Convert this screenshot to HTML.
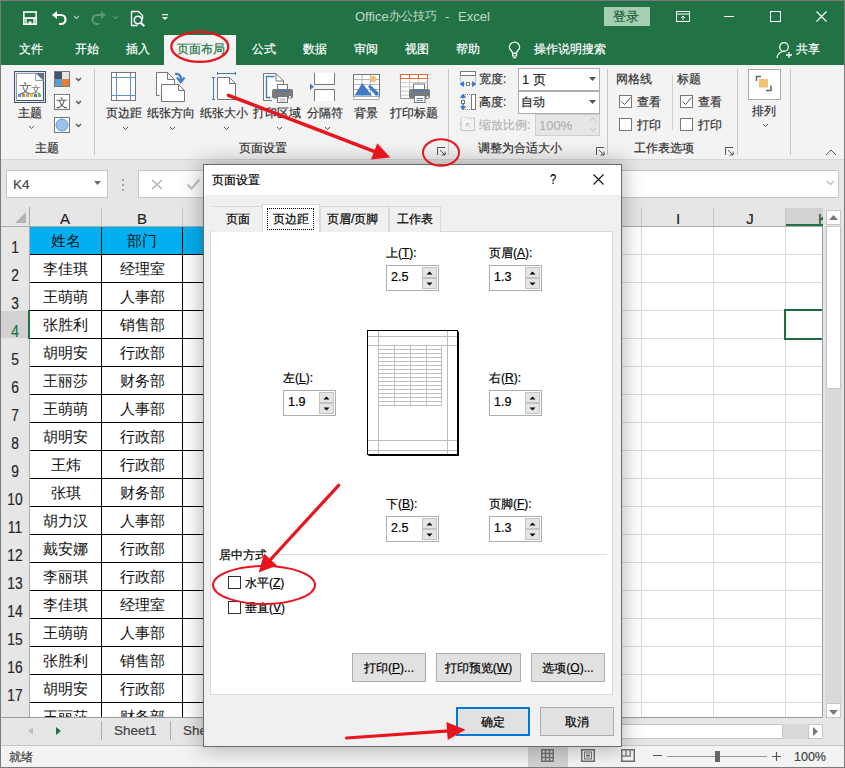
<!DOCTYPE html><html><head><meta charset="utf-8"><style>
html,body{margin:0;padding:0}
body{width:845px;height:768px;position:relative;overflow:hidden;background:#fff;font-family:"Liberation Sans",sans-serif}
.t{position:absolute;white-space:nowrap;line-height:1;-webkit-text-stroke:0.2px}
.n{-webkit-text-stroke:0}
div,svg{box-sizing:border-box}
</style></head><body>
<div style="position:absolute;left:0px;top:0px;width:845px;height:768px;background:#f3f3f3"></div>
<div style="position:absolute;left:0px;top:0px;width:845px;height:65px;background:#217346"></div>
<svg style="position:absolute;left:20px;top:8px;" width="20" height="20" viewBox="20 8 20 20"><rect x="23.8" y="12" width="12.4" height="12.2" fill="none" stroke="#fff" stroke-width="1.6"/><rect x="23" y="17.2" width="14" height="1.8" fill="#fff"/><path d="M26 19V24.5M34 19V24.5" stroke="#fff" stroke-width="1.4"/><rect x="28.5" y="21.5" width="3" height="3" fill="#fff"/></svg>
<svg style="position:absolute;left:51px;top:10px;" width="17" height="16" viewBox="0 0 17 16"><path d="M4 5h6a4.5 4.5 0 0 1 0 9h-2" fill="none" stroke="#fff" stroke-width="2.2"/><path d="M1 5l5-4v8z" fill="#fff"/></svg>
<svg style="position:absolute;left:73px;top:15px;" width="7" height="5" viewBox="0 0 7 5"><path d="M1 1l2.5 2.5L6 1" fill="none" stroke="#a9c9b5" stroke-width="1.2"/></svg>
<svg style="position:absolute;left:90px;top:10px;" width="17" height="16" viewBox="0 0 17 16"><path d="M13 5H7a4.5 4.5 0 0 0 0 9h2" fill="none" stroke="#5b9873" stroke-width="2.2"/><path d="M16 5l-5-4v8z" fill="#5b9873"/></svg>
<svg style="position:absolute;left:111.5px;top:15px;" width="7" height="5" viewBox="0 0 7 5"><path d="M1 1l2.5 2.5L6 1" fill="none" stroke="#5b9873" stroke-width="1.2"/></svg>
<svg style="position:absolute;left:130px;top:10px;" width="16" height="17" viewBox="0 0 16 17"><path d="M1.5 1.5h7l4 4v4M1.5 1.5v14h6" fill="none" stroke="#fff" stroke-width="1.3"/><circle cx="8" cy="10" r="3.8" fill="none" stroke="#fff" stroke-width="1.6"/><path d="M10.8 12.8l3.5 3.5" stroke="#fff" stroke-width="2"/></svg>
<svg style="position:absolute;left:162px;top:14px;" width="7" height="7" viewBox="0 0 7 7"><rect x="0" y="0" width="6" height="1.2" fill="#fff"/><path d="M0 3h6l-3 3z" fill="#fff"/></svg>
<div class="t" style="left:355px;top:10px;font-size:13px;color:#c2d8ca;-webkit-text-stroke:0">Office</div>
<div class="t" style="left:389px;top:10px;font-size:12px;color:#c2d8ca;-webkit-text-stroke:0">办公技巧</div>
<div class="t" style="left:445px;top:10px;font-size:13px;color:#c2d8ca;-webkit-text-stroke:0">-</div>
<div class="t" style="left:458px;top:10px;font-size:13px;color:#c2d8ca;-webkit-text-stroke:0">Excel</div>
<div style="position:absolute;left:604px;top:7px;width:46px;height:19px;background:#a5cfb3"></div>
<div class="t" style="left:613px;top:10px;font-size:13px;color:#1f5d38;">登录</div>
<svg style="position:absolute;left:676px;top:11px;" width="14" height="11" viewBox="0 0 14 11"><rect x="0.5" y="0.5" width="13" height="10" fill="none" stroke="#fff" stroke-width="1"/><path d="M0.5 3h13" stroke="#fff"/><path d="M7 9V5M5 7l2-2 2 2" fill="none" stroke="#fff"/></svg>
<div style="position:absolute;left:724px;top:16px;width:10px;height:1px;background:#fff"></div>
<svg style="position:absolute;left:770px;top:11px;" width="11" height="11" viewBox="0 0 11 11"><rect x="0.5" y="0.5" width="10" height="10" fill="none" stroke="#fff" stroke-width="1"/></svg>
<svg style="position:absolute;left:816px;top:11px;" width="11" height="11" viewBox="0 0 11 11"><path d="M0.5 0.5l10 10M10.5 0.5l-10 10" stroke="#fff" stroke-width="1.1"/></svg>
<div style="position:absolute;left:164px;top:35px;width:72px;height:30px;background:#f3f3f3"></div>
<div class="t" style="left:18.5px;top:43px;font-size:12px;color:#fff;">文件</div>
<div class="t" style="left:74.5px;top:43px;font-size:12px;color:#fff;">开始</div>
<div class="t" style="left:125.5px;top:43px;font-size:12px;color:#fff;">插入</div>
<div class="t" style="left:176.5px;top:43px;font-size:12px;color:#217346;">页面布局</div>
<div class="t" style="left:251.5px;top:43px;font-size:12px;color:#fff;">公式</div>
<div class="t" style="left:302.5px;top:43px;font-size:12px;color:#fff;">数据</div>
<div class="t" style="left:353.5px;top:43px;font-size:12px;color:#fff;">审阅</div>
<div class="t" style="left:404.5px;top:43px;font-size:12px;color:#fff;">视图</div>
<div class="t" style="left:455.5px;top:43px;font-size:12px;color:#fff;">帮助</div>
<svg style="position:absolute;left:500px;top:36px;" width="30" height="26" viewBox="500 36 30 26"><path d="M512.5 53.2C512.5 51 509.3 49.5 509.3 47.4A5.2 5.2 0 0 1 519.7 47.4C519.7 49.5 516.5 51 516.5 53.2Z" fill="none" stroke="#fff" stroke-width="1.2"/><rect x="512.6" y="53.6" width="4" height="2.4" fill="none" stroke="#fff" stroke-width="1.1"/><path d="M513 57.8H516.2" stroke="#fff" stroke-width="1.1"/></svg>
<div class="t" style="left:534px;top:43px;font-size:12px;color:#fff;">操作说明搜索</div>
<svg style="position:absolute;left:776px;top:42px;" width="18" height="17" viewBox="0 0 18 17"><circle cx="8" cy="5" r="4.3" fill="none" stroke="#fff" stroke-width="1.2"/><path d="M1 16a7 7 0 0 1 8-6.5" fill="none" stroke="#fff" stroke-width="1.2"/><path d="M13 10v6M10 13h6" stroke="#fff" stroke-width="1.3"/></svg>
<div class="t" style="left:796px;top:43px;font-size:12px;color:#fff;">共享</div>
<div style="position:absolute;left:0px;top:159px;width:845px;height:1px;background:#d6d6d6"></div>
<div style="position:absolute;left:94px;top:69px;width:1px;height:86px;background:#c8c8c8"></div>
<div style="position:absolute;left:448px;top:69px;width:1px;height:86px;background:#c8c8c8"></div>
<div style="position:absolute;left:607px;top:69px;width:1px;height:86px;background:#c8c8c8"></div>
<div style="position:absolute;left:737px;top:69px;width:1px;height:86px;background:#c8c8c8"></div>
<div style="position:absolute;left:790px;top:69px;width:1px;height:86px;background:#c8c8c8"></div>
<div style="position:absolute;left:672px;top:75px;width:1px;height:55px;background:#d0d0d0"></div>
<svg style="position:absolute;left:10px;top:66px;" width="40" height="40" viewBox="10 66 40 40"><rect x="14.5" y="71.5" width="31" height="31" fill="#e3e7ec" stroke="#44546a"/><path d="M16.5 73.5H36L43.5 81V100.5H16.5Z" fill="#fff" stroke="#8a9ab0"/><path d="M43.5 81V100.5H16.5" fill="none" stroke="#44546a" stroke-width="1.2"/><path d="M35.6 73H44V81.5Z" fill="#5f6f85"/><path d="M35.6 73.5V80.5H43.5" fill="#fff" stroke="#8a9ab0"/><text x="18.5" y="92.5" font-size="13" fill="#606060" style="font-family:Liberation Sans,sans-serif">文</text><text x="31" y="92.5" font-size="10" fill="#606060">文</text><rect x="18" y="94" width="3" height="3" fill="#5b9bd5"/><rect x="22" y="94" width="3" height="3" fill="#ed7d31"/><rect x="26" y="94" width="3" height="3" fill="#a5a5a5"/><rect x="30" y="94" width="3" height="3" fill="#ffc000"/><rect x="34" y="94" width="3" height="3" fill="#4472c4"/><rect x="38" y="94" width="3" height="3" fill="#70ad47"/></svg>
<div class="t" style="left:18px;top:107px;font-size:12px;color:#303030;">主题</div>
<svg style="position:absolute;left:28px;top:125px;" width="7" height="5" viewBox="0 0 7 5"><path d="M1 1l2.5 2.5L6 1" fill="none" stroke="#555" stroke-width="1"/></svg>
<svg style="position:absolute;left:54px;top:71px;" width="16" height="16" viewBox="0 0 16 16"><rect x="0.5" y="0.5" width="15" height="15" fill="#fff" stroke="#777"/><rect x="1" y="1" width="7" height="7" fill="#44546a"/><rect x="8" y="1" width="7" height="7" fill="#e7e6e6"/><rect x="1" y="8" width="7" height="7" fill="#5b9bd5"/><rect x="8" y="8" width="7" height="7" fill="#ed7d31"/></svg>
<svg style="position:absolute;left:54px;top:94px;" width="16" height="16" viewBox="0 0 16 16"><rect x="0.5" y="0.5" width="15" height="15" fill="#fff" stroke="#777"/><text x="2" y="13" font-size="12" fill="#444">文</text></svg>
<svg style="position:absolute;left:54px;top:117px;" width="16" height="16" viewBox="0 0 16 16"><rect x="0.5" y="0.5" width="15" height="15" fill="#fff" stroke="#777"/><circle cx="8" cy="8" r="6" fill="#9dc3e6" stroke="#5b9bd5"/></svg>
<svg style="position:absolute;left:75px;top:77px;" width="7" height="5" viewBox="0 0 7 5"><path d="M1 1l2.5 2.5L6 1" fill="none" stroke="#555" stroke-width="1.3"/></svg>
<svg style="position:absolute;left:75px;top:100px;" width="7" height="5" viewBox="0 0 7 5"><path d="M1 1l2.5 2.5L6 1" fill="none" stroke="#555" stroke-width="1.3"/></svg>
<svg style="position:absolute;left:75px;top:123px;" width="7" height="5" viewBox="0 0 7 5"><path d="M1 1l2.5 2.5L6 1" fill="none" stroke="#555" stroke-width="1.3"/></svg>
<div class="t" style="left:35px;top:142px;font-size:12px;color:#303030;">主题</div>
<svg style="position:absolute;left:111px;top:72px;" width="25" height="29" viewBox="0 0 25 29"><rect x="0.5" y="0.5" width="24" height="28" fill="#fff" stroke="#777"/><path d="M5.5 1v27M19.5 1v27M1 5.5h23M1 23.5h23" stroke="#5b8fd0" stroke-width="1"/></svg>
<div class="t" style="left:106px;top:107px;font-size:12px;color:#303030;">页边距</div>
<svg style="position:absolute;left:150px;top:66px;" width="40" height="40" viewBox="150 66 40 40"><path d="M156.5 95.5V72.5H167.5L174.5 79.5V84" fill="#fff" stroke="#767676"/><path d="M156.5 95.5H159.5" stroke="#767676"/><path d="M161.5 84.5H178.5L184.5 90.5V101.5H161.5Z" fill="#fff" stroke="#767676"/><path d="M167.5 72.5V79.5H174.5M178.5 84.5V90.5H184.5" fill="none" stroke="#767676"/><path d="M175 74C179.5 73.5 181.5 76 180.8 80" fill="none" stroke="#3f7cc4" stroke-width="2.2"/><path d="M177 77.5L180.8 82L184.6 77.5" fill="none" stroke="#3f7cc4" stroke-width="2.2"/></svg>
<div class="t" style="left:147px;top:107px;font-size:12px;color:#303030;">纸张方向</div>
<svg style="position:absolute;left:205px;top:66px;" width="40" height="40" viewBox="205 66 40 40"><path d="M217.5 77.5H229.5L235.5 83.5V99.5H217.5Z" fill="#fff" stroke="#767676"/><path d="M229.5 77.5V83.5H235.5" fill="none" stroke="#767676"/><path d="M217.5 73.5H235.5M217.5 72V75M235.5 72V75M213.5 77.5V99.5M212 77.5H215M212 99.5H215" stroke="#3f7cc4" stroke-width="1"/></svg>
<div class="t" style="left:200px;top:107px;font-size:12px;color:#303030;">纸张大小</div>
<svg style="position:absolute;left:255px;top:66px;" width="45" height="40" viewBox="255 66 45 40"><path d="M263.5 100.5V73.5H276L283.5 81V88" fill="#fff" stroke="#767676"/><path d="M263.5 100.5H272" stroke="#767676"/><path d="M276 73.5V81H283.5" fill="none" stroke="#767676"/><path d="M274.5 76.5H266.5V97.5H270.5" fill="none" stroke="#3f7cc4" stroke-width="1.4"/><rect x="277.5" y="84.5" width="10" height="6" fill="#fff" stroke="#767676"/><rect x="272" y="89" width="21" height="9.5" rx="2" fill="#7a7a7a"/><path d="M277 91.2H290" stroke="#3f7cc4" stroke-width="1.4"/><rect x="277.5" y="96.5" width="10" height="6" fill="#fff" stroke="#767676"/><path d="M279.5 99H285.5M279.5 101H285.5" stroke="#999" stroke-width="0.8"/><circle cx="290" cy="97" r="1" fill="#fff"/></svg>
<div class="t" style="left:253px;top:107px;font-size:12px;color:#303030;">打印区域</div>
<svg style="position:absolute;left:305px;top:66px;" width="35" height="40" viewBox="305 66 35 40"><path d="M314.5 73V84.5H334.5V73" fill="#fff" stroke="#767676"/><path d="M315 73H334V84H315Z" fill="#fff"/><path d="M314.5 73V84.5H334.5V73" fill="none" stroke="#767676"/><path d="M315 90H334V101H315Z" fill="#fff"/><path d="M314.5 101V89.5H334.5V101" fill="none" stroke="#767676"/><path d="M310 83.5L314 86.8L310 90Z" fill="#3f7cc4"/></svg>
<div class="t" style="left:307px;top:107px;font-size:12px;color:#303030;">分隔符</div>
<svg style="position:absolute;left:350px;top:70px;" width="35" height="33" viewBox="350 70 35 33"><rect x="353.5" y="74.5" width="26" height="22" fill="#fff" stroke="#767676"/><path d="M354 79.5H379M354 84.5H379M354 89.5H379M362 75V96M370.5 75V96" stroke="#b4b4b4" stroke-width="1"/><path d="M354 96.5H379V99.5H354Z" fill="#fff" stroke="#aaa"/><path d="M354.5 95.5L362.2 83L372 95.5Z" fill="#3f7cc4"/><path d="M368 86.5L370 84.8L378.5 92.5V95.5H375.5Z" fill="#3f7cc4"/><circle cx="373" cy="79" r="3.2" fill="#efc27a"/></svg>
<div class="t" style="left:354px;top:107px;font-size:12px;color:#303030;">背景</div>
<svg style="position:absolute;left:395px;top:70px;" width="40" height="35" viewBox="395 70 40 35"><rect x="400.5" y="74.5" width="27" height="24" fill="#fff" stroke="#9a9a9a"/><path d="M401 82.7H427M401 86.9H427M401 91.1H427M401 95.3H427M409.5 78V98M418.5 78V98" stroke="#c8c8c8" stroke-width="1"/><path d="M400.5 74.5H427.5V78.5H400.5ZM409.5 74.5V78.5M418.5 74.5V78.5" fill="none" stroke="#e2673f" stroke-width="1.2"/><rect x="413.5" y="84" width="11" height="6" fill="#fff" stroke="#767676"/><rect x="409" y="89" width="21" height="9.5" rx="2" fill="#7a7a7a"/><path d="M413 91H426" stroke="#3f7cc4" stroke-width="1.4"/><rect x="414.5" y="95.5" width="10.5" height="7" fill="#fff" stroke="#767676"/><path d="M416.5 98.5H423M416.5 100.5H423" stroke="#3f7cc4" stroke-width="0.9"/><circle cx="427.5" cy="97" r="1" fill="#fff"/></svg>
<div class="t" style="left:390px;top:107px;font-size:12px;color:#303030;">打印标题</div>
<svg style="position:absolute;left:122px;top:126px;" width="7" height="5" viewBox="0 0 7 5"><path d="M1 1l2.5 2.5L6 1" fill="none" stroke="#555" stroke-width="1"/></svg>
<svg style="position:absolute;left:169px;top:126px;" width="7" height="5" viewBox="0 0 7 5"><path d="M1 1l2.5 2.5L6 1" fill="none" stroke="#555" stroke-width="1"/></svg>
<svg style="position:absolute;left:223px;top:126px;" width="7" height="5" viewBox="0 0 7 5"><path d="M1 1l2.5 2.5L6 1" fill="none" stroke="#555" stroke-width="1"/></svg>
<svg style="position:absolute;left:276px;top:126px;" width="7" height="5" viewBox="0 0 7 5"><path d="M1 1l2.5 2.5L6 1" fill="none" stroke="#555" stroke-width="1"/></svg>
<svg style="position:absolute;left:324px;top:126px;" width="7" height="5" viewBox="0 0 7 5"><path d="M1 1l2.5 2.5L6 1" fill="none" stroke="#555" stroke-width="1"/></svg>
<div class="t" style="left:239px;top:142px;font-size:12px;color:#303030;">页面设置</div>
<svg style="position:absolute;left:437px;top:147px;" width="9" height="9" viewBox="0 0 9 9"><path d="M0.5 8V0.5H8" fill="none" stroke="#555"/><path d="M3 3l5 5M8 4.5V8H4.5" fill="none" stroke="#555"/></svg>
<svg style="position:absolute;left:455px;top:66px;" width="25" height="25" viewBox="455 66 25 25"><rect x="460.5" y="71.5" width="15" height="4" fill="#fff" stroke="#777"/><path d="M460.5 76.5V82M475.5 76.5V82" stroke="#888" stroke-dasharray="1 1"/><path d="M460 84L463.5 81.5V86.5ZM476 84L472.5 81.5V86.5Z" fill="#3b78c2" stroke="#3b78c2" stroke-width="0.8"/><path d="M462 84H464.5M471.5 84H474" stroke="#3b78c2" stroke-width="1.5"/><rect x="466.5" y="82.5" width="3" height="3" fill="#fff" stroke="#777"/></svg>
<div class="t" style="left:479px;top:73px;font-size:12px;color:#303030;">宽度:</div>
<div style="position:absolute;left:518px;top:68px;width:82px;height:23px;background:#fff;border:1px solid #abadb3"></div>
<div class="t" style="left:522px;top:73px;font-size:13px;color:#262626;">1 页</div>
<svg style="position:absolute;left:589px;top:77px;" width="7" height="4" viewBox="0 0 7 4"><path d="M0 0h7l-3.5 4z" fill="#555"/></svg>
<svg style="position:absolute;left:455px;top:90px;" width="25" height="25" viewBox="455 90 25 25"><rect x="471.5" y="94.5" width="4" height="15" fill="#fff" stroke="#777"/><path d="M465 94.5H470M465 109.5H470" stroke="#888" stroke-dasharray="1 1"/><path d="M463 94L460.5 97.5H465.5ZM463 110L460.5 106.5H465.5Z" fill="#3b78c2" stroke="#3b78c2" stroke-width="0.8"/><path d="M463 96V98.5M463 103.5V106" stroke="#3b78c2" stroke-width="1.5"/><rect x="461.5" y="100.5" width="3" height="3" fill="#fff" stroke="#777"/></svg>
<div class="t" style="left:479px;top:96px;font-size:12px;color:#303030;">高度:</div>
<div style="position:absolute;left:518px;top:91px;width:82px;height:23px;background:#fff;border:1px solid #abadb3"></div>
<div class="t" style="left:521px;top:96px;font-size:12px;color:#262626;">自动</div>
<svg style="position:absolute;left:589px;top:100px;" width="7" height="4" viewBox="0 0 7 4"><path d="M0 0h7l-3.5 4z" fill="#555"/></svg>
<svg style="position:absolute;left:455px;top:112px;" width="25" height="25" viewBox="455 112 25 25"><path d="M460.5 126V117.5H469.5V120" fill="none" stroke="#c4c4c4" stroke-dasharray="1 1"/><path d="M461 120.5V130.5H474.5V118H470" fill="none" stroke="#c4c4c4" stroke-width="1"/><path d="M466.5 123.5L470.5 127.5M466.5 123.5V126.5M466.5 123.5H469.5" fill="none" stroke="#c4c4c4" stroke-width="1"/></svg>
<div class="t" style="left:479px;top:119px;font-size:12px;color:#b4b4b4;">缩放比例:</div>
<div style="position:absolute;left:535px;top:114px;width:65px;height:22px;background:#e6e6e6;border:1px solid #cfcfcf"></div>
<div class="t" style="left:539px;top:119px;font-size:13px;color:#b0b0b0;">100%</div>
<svg style="position:absolute;left:589px;top:117px;" width="8" height="15" viewBox="0 0 8 15"><path d="M1 4l3-3 3 3M1 11l3 3 3-3" fill="none" stroke="#c0c0c0"/></svg>
<div class="t" style="left:478px;top:142px;font-size:12px;color:#303030;">调整为合适大小</div>
<svg style="position:absolute;left:596px;top:147px;" width="9" height="9" viewBox="0 0 9 9"><path d="M0.5 8V0.5H8" fill="none" stroke="#555"/><path d="M3 3l5 5M8 4.5V8H4.5" fill="none" stroke="#555"/></svg>
<div class="t" style="left:616px;top:73px;font-size:12px;color:#303030;">网格线</div>
<div class="t" style="left:677px;top:73px;font-size:12px;color:#303030;">标题</div>
<svg style="position:absolute;left:619px;top:95px;" width="13" height="13" viewBox="0 0 13 13"><rect x="0.5" y="0.5" width="12" height="12" fill="#fff" stroke="#777"/><path d="M2.5 6.5l3 3 6-7" fill="none" stroke="#555" stroke-width="1"/></svg>
<svg style="position:absolute;left:619px;top:118px;" width="13" height="13" viewBox="0 0 13 13"><rect x="0.5" y="0.5" width="12" height="12" fill="#fff" stroke="#777"/></svg>
<div class="t" style="left:637px;top:96px;font-size:12px;color:#303030;">查看</div>
<div class="t" style="left:637px;top:119px;font-size:12px;color:#303030;">打印</div>
<svg style="position:absolute;left:680px;top:95px;" width="13" height="13" viewBox="0 0 13 13"><rect x="0.5" y="0.5" width="12" height="12" fill="#fff" stroke="#777"/><path d="M2.5 6.5l3 3 6-7" fill="none" stroke="#555" stroke-width="1"/></svg>
<svg style="position:absolute;left:680px;top:118px;" width="13" height="13" viewBox="0 0 13 13"><rect x="0.5" y="0.5" width="12" height="12" fill="#fff" stroke="#777"/></svg>
<div class="t" style="left:698px;top:96px;font-size:12px;color:#303030;">查看</div>
<div class="t" style="left:698px;top:119px;font-size:12px;color:#303030;">打印</div>
<div class="t" style="left:634px;top:142px;font-size:12px;color:#303030;">工作表选项</div>
<svg style="position:absolute;left:725px;top:147px;" width="9" height="9" viewBox="0 0 9 9"><path d="M0.5 8V0.5H8" fill="none" stroke="#555"/><path d="M3 3l5 5M8 4.5V8H4.5" fill="none" stroke="#555"/></svg>
<div style="position:absolute;left:748px;top:69px;width:33px;height:31px;background:#fff;border:1px solid #aaa"></div>
<svg style="position:absolute;left:750px;top:70px;" width="30" height="30" viewBox="750 70 30 30"><path d="M756.5 81V76.5H761M771 85.5V90.5H766" fill="none" stroke="#666" stroke-width="1.5"/><rect x="759" y="79" width="9" height="8.5" fill="#edc275"/></svg>
<div class="t" style="left:752px;top:105px;font-size:12px;color:#303030;">排列</div>
<svg style="position:absolute;left:762px;top:123px;" width="7" height="5" viewBox="0 0 7 5"><path d="M1 1l2.5 2.5L6 1" fill="none" stroke="#555" stroke-width="1"/></svg>
<svg style="position:absolute;left:825px;top:149px;" width="12" height="7" viewBox="0 0 12 7"><path d="M1 6l5-5 5 5" fill="none" stroke="#555" stroke-width="1"/></svg>
<div style="position:absolute;left:1px;top:160px;width:843px;height:47px;background:#e6e6e6"></div>
<div style="position:absolute;left:6px;top:170px;width:102px;height:28px;background:#fff;border:1px solid #c6c6c6"></div>
<div class="t" style="left:13px;top:178px;font-size:13.5px;color:#444;">K4</div>
<svg style="position:absolute;left:94px;top:181px;" width="7" height="4" viewBox="0 0 7 4"><path d="M0 0h7l-3.5 4z" fill="#666"/></svg>
<div style="position:absolute;left:122px;top:179px;width:2px;height:2px;background:#a0a0a0"></div>
<div style="position:absolute;left:122px;top:184px;width:2px;height:2px;background:#a0a0a0"></div>
<div style="position:absolute;left:122px;top:189px;width:2px;height:2px;background:#a0a0a0"></div>
<div style="position:absolute;left:138px;top:170px;width:701px;height:28px;background:#fff;border:1px solid #c6c6c6"></div>
<svg style="position:absolute;left:826px;top:180px;" width="9" height="6" viewBox="0 0 9 6"><path d="M1 1l3.5 3.5L8 1" fill="none" stroke="#c0c0c0" stroke-width="1.5"/></svg>
<svg style="position:absolute;left:151px;top:179px;" width="12" height="11" viewBox="0 0 12 11"><path d="M1 1l10 9M11 1L1 10" stroke="#b0b0b0" stroke-width="1.3"/></svg>
<svg style="position:absolute;left:186px;top:177px;" width="15" height="13" viewBox="0 0 15 13"><path d="M1.5 7.5l4 4L13.5 2.5" fill="none" stroke="#c4c4c4" stroke-width="2.2"/></svg>
<div style="position:absolute;left:1px;top:207px;width:822px;height:20px;background:#e6e6e6"></div>
<div style="position:absolute;left:1px;top:226px;width:822px;height:1px;background:#ababab"></div>
<svg style="position:absolute;left:15px;top:212px;" width="12" height="11" viewBox="0 0 12 11"><path d="M11 0v11H0z" fill="#b4b4b4"/></svg>
<div style="position:absolute;left:1px;top:227px;width:28px;height:490px;background:#e6e6e6"></div>
<div style="position:absolute;left:29px;top:207px;width:1px;height:510px;background:#ababab"></div>
<div style="position:absolute;left:101px;top:208px;width:1px;height:18px;background:#c6c6c6"></div>
<div style="position:absolute;left:182px;top:208px;width:1px;height:18px;background:#c6c6c6"></div>
<div style="position:absolute;left:641px;top:208px;width:1px;height:18px;background:#c6c6c6"></div>
<div style="position:absolute;left:713px;top:208px;width:1px;height:18px;background:#c6c6c6"></div>
<div style="position:absolute;left:785px;top:208px;width:1px;height:18px;background:#c6c6c6"></div>
<div class="t" style="left:45.0px;top:211px;width:40px;text-align:center;font-size:15px;color:#262626;">A</div>
<div class="t" style="left:122.0px;top:211px;width:40px;text-align:center;font-size:15px;color:#262626;">B</div>
<div class="t" style="left:658.0px;top:211px;width:40px;text-align:center;font-size:15px;color:#262626;">I</div>
<div class="t" style="left:730.0px;top:211px;width:40px;text-align:center;font-size:15px;color:#262626;">J</div>
<div style="position:absolute;left:786px;top:208px;width:37px;height:18px;background:#d2d2d2"></div>
<div style="position:absolute;left:786px;top:224px;width:37px;height:2px;background:#217346"></div>
<div class="t" style="left:818px;top:211px;font-size:15px;color:#1e5a37;">K</div>
<div style="position:absolute;left:30px;top:227px;width:793px;height:490px;background:#fff"></div>
<div style="position:absolute;left:30px;top:254px;width:793px;height:1px;background:#dadada"></div>
<div style="position:absolute;left:30px;top:282px;width:793px;height:1px;background:#dadada"></div>
<div style="position:absolute;left:30px;top:310px;width:793px;height:1px;background:#dadada"></div>
<div style="position:absolute;left:30px;top:338px;width:793px;height:1px;background:#dadada"></div>
<div style="position:absolute;left:30px;top:366px;width:793px;height:1px;background:#dadada"></div>
<div style="position:absolute;left:30px;top:394px;width:793px;height:1px;background:#dadada"></div>
<div style="position:absolute;left:30px;top:422px;width:793px;height:1px;background:#dadada"></div>
<div style="position:absolute;left:30px;top:450px;width:793px;height:1px;background:#dadada"></div>
<div style="position:absolute;left:30px;top:478px;width:793px;height:1px;background:#dadada"></div>
<div style="position:absolute;left:30px;top:506px;width:793px;height:1px;background:#dadada"></div>
<div style="position:absolute;left:30px;top:534px;width:793px;height:1px;background:#dadada"></div>
<div style="position:absolute;left:30px;top:562px;width:793px;height:1px;background:#dadada"></div>
<div style="position:absolute;left:30px;top:590px;width:793px;height:1px;background:#dadada"></div>
<div style="position:absolute;left:30px;top:618px;width:793px;height:1px;background:#dadada"></div>
<div style="position:absolute;left:30px;top:646px;width:793px;height:1px;background:#dadada"></div>
<div style="position:absolute;left:30px;top:674px;width:793px;height:1px;background:#dadada"></div>
<div style="position:absolute;left:30px;top:702px;width:793px;height:1px;background:#dadada"></div>
<div style="position:absolute;left:641px;top:227px;width:1px;height:490px;background:#dadada"></div>
<div style="position:absolute;left:713px;top:227px;width:1px;height:490px;background:#dadada"></div>
<div style="position:absolute;left:785px;top:227px;width:1px;height:490px;background:#dadada"></div>
<div style="position:absolute;left:1px;top:311px;width:28px;height:27px;background:#d2d2d2"></div>
<div style="position:absolute;left:28px;top:310px;width:2px;height:29px;background:#217346"></div>
<div style="position:absolute;left:30px;top:227px;width:173px;height:27px;background:#00b0f0"></div>
<div style="position:absolute;left:30px;top:226px;width:173px;height:1px;transparent"></div>
<div style="position:absolute;left:30px;top:254px;width:173px;height:1px;background:#000"></div>
<div style="position:absolute;left:30px;top:282px;width:173px;height:1px;background:#000"></div>
<div style="position:absolute;left:30px;top:310px;width:173px;height:1px;background:#000"></div>
<div style="position:absolute;left:30px;top:338px;width:173px;height:1px;background:#000"></div>
<div style="position:absolute;left:30px;top:366px;width:173px;height:1px;background:#000"></div>
<div style="position:absolute;left:30px;top:394px;width:173px;height:1px;background:#000"></div>
<div style="position:absolute;left:30px;top:422px;width:173px;height:1px;background:#000"></div>
<div style="position:absolute;left:30px;top:450px;width:173px;height:1px;background:#000"></div>
<div style="position:absolute;left:30px;top:478px;width:173px;height:1px;background:#000"></div>
<div style="position:absolute;left:30px;top:506px;width:173px;height:1px;background:#000"></div>
<div style="position:absolute;left:30px;top:534px;width:173px;height:1px;background:#000"></div>
<div style="position:absolute;left:30px;top:562px;width:173px;height:1px;background:#000"></div>
<div style="position:absolute;left:30px;top:590px;width:173px;height:1px;background:#000"></div>
<div style="position:absolute;left:30px;top:618px;width:173px;height:1px;background:#000"></div>
<div style="position:absolute;left:30px;top:646px;width:173px;height:1px;background:#000"></div>
<div style="position:absolute;left:30px;top:674px;width:173px;height:1px;background:#000"></div>
<div style="position:absolute;left:30px;top:702px;width:173px;height:1px;background:#000"></div>
<div style="position:absolute;left:101px;top:227px;width:1px;height:490px;background:#000"></div>
<div style="position:absolute;left:182px;top:227px;width:1px;height:490px;background:#000"></div>
<div class="t" style="left:1px;top:240px;width:28px;text-align:center;font-size:16px;color:#262626;transform:scaleX(0.86)">1</div>
<div class="t" style="left:1px;top:268px;width:28px;text-align:center;font-size:16px;color:#262626;transform:scaleX(0.86)">2</div>
<div class="t" style="left:1px;top:296px;width:28px;text-align:center;font-size:16px;color:#262626;transform:scaleX(0.86)">3</div>
<div class="t" style="left:1px;top:324px;width:28px;text-align:center;font-size:16px;color:#217346;transform:scaleX(0.86)">4</div>
<div class="t" style="left:1px;top:352px;width:28px;text-align:center;font-size:16px;color:#262626;transform:scaleX(0.86)">5</div>
<div class="t" style="left:1px;top:380px;width:28px;text-align:center;font-size:16px;color:#262626;transform:scaleX(0.86)">6</div>
<div class="t" style="left:1px;top:408px;width:28px;text-align:center;font-size:16px;color:#262626;transform:scaleX(0.86)">7</div>
<div class="t" style="left:1px;top:436px;width:28px;text-align:center;font-size:16px;color:#262626;transform:scaleX(0.86)">8</div>
<div class="t" style="left:1px;top:464px;width:28px;text-align:center;font-size:16px;color:#262626;transform:scaleX(0.86)">9</div>
<div class="t" style="left:1px;top:492px;width:28px;text-align:center;font-size:16px;color:#262626;transform:scaleX(0.86)">10</div>
<div class="t" style="left:1px;top:520px;width:28px;text-align:center;font-size:16px;color:#262626;transform:scaleX(0.86)">11</div>
<div class="t" style="left:1px;top:548px;width:28px;text-align:center;font-size:16px;color:#262626;transform:scaleX(0.86)">12</div>
<div class="t" style="left:1px;top:576px;width:28px;text-align:center;font-size:16px;color:#262626;transform:scaleX(0.86)">13</div>
<div class="t" style="left:1px;top:604px;width:28px;text-align:center;font-size:16px;color:#262626;transform:scaleX(0.86)">14</div>
<div class="t" style="left:1px;top:632px;width:28px;text-align:center;font-size:16px;color:#262626;transform:scaleX(0.86)">15</div>
<div class="t" style="left:1px;top:660px;width:28px;text-align:center;font-size:16px;color:#262626;transform:scaleX(0.86)">16</div>
<div class="t" style="left:1px;top:688px;width:28px;text-align:center;font-size:16px;color:#262626;transform:scaleX(0.86)">17</div>
<div class="t" style="left:1px;top:716px;width:28px;text-align:center;font-size:16px;color:#262626;transform:scaleX(0.86)">18</div>
<div class="t" style="left:30px;top:233px;width:71px;text-align:center;font-size:15px;color:#111;-webkit-text-stroke:0">姓名</div>
<div class="t" style="left:102px;top:233px;width:80px;text-align:center;font-size:15px;color:#111;-webkit-text-stroke:0">部门</div>
<div class="t" style="left:30px;top:261px;width:71px;text-align:center;font-size:15px;color:#111;-webkit-text-stroke:0">李佳琪</div>
<div class="t" style="left:102px;top:261px;width:80px;text-align:center;font-size:15px;color:#111;-webkit-text-stroke:0">经理室</div>
<div class="t" style="left:30px;top:289px;width:71px;text-align:center;font-size:15px;color:#111;-webkit-text-stroke:0">王萌萌</div>
<div class="t" style="left:102px;top:289px;width:80px;text-align:center;font-size:15px;color:#111;-webkit-text-stroke:0">人事部</div>
<div class="t" style="left:30px;top:317px;width:71px;text-align:center;font-size:15px;color:#111;-webkit-text-stroke:0">张胜利</div>
<div class="t" style="left:102px;top:317px;width:80px;text-align:center;font-size:15px;color:#111;-webkit-text-stroke:0">销售部</div>
<div class="t" style="left:30px;top:345px;width:71px;text-align:center;font-size:15px;color:#111;-webkit-text-stroke:0">胡明安</div>
<div class="t" style="left:102px;top:345px;width:80px;text-align:center;font-size:15px;color:#111;-webkit-text-stroke:0">行政部</div>
<div class="t" style="left:30px;top:373px;width:71px;text-align:center;font-size:15px;color:#111;-webkit-text-stroke:0">王丽莎</div>
<div class="t" style="left:102px;top:373px;width:80px;text-align:center;font-size:15px;color:#111;-webkit-text-stroke:0">财务部</div>
<div class="t" style="left:30px;top:401px;width:71px;text-align:center;font-size:15px;color:#111;-webkit-text-stroke:0">王萌萌</div>
<div class="t" style="left:102px;top:401px;width:80px;text-align:center;font-size:15px;color:#111;-webkit-text-stroke:0">人事部</div>
<div class="t" style="left:30px;top:429px;width:71px;text-align:center;font-size:15px;color:#111;-webkit-text-stroke:0">胡明安</div>
<div class="t" style="left:102px;top:429px;width:80px;text-align:center;font-size:15px;color:#111;-webkit-text-stroke:0">行政部</div>
<div class="t" style="left:30px;top:457px;width:71px;text-align:center;font-size:15px;color:#111;-webkit-text-stroke:0">王炜</div>
<div class="t" style="left:102px;top:457px;width:80px;text-align:center;font-size:15px;color:#111;-webkit-text-stroke:0">行政部</div>
<div class="t" style="left:30px;top:485px;width:71px;text-align:center;font-size:15px;color:#111;-webkit-text-stroke:0">张琪</div>
<div class="t" style="left:102px;top:485px;width:80px;text-align:center;font-size:15px;color:#111;-webkit-text-stroke:0">财务部</div>
<div class="t" style="left:30px;top:513px;width:71px;text-align:center;font-size:15px;color:#111;-webkit-text-stroke:0">胡力汉</div>
<div class="t" style="left:102px;top:513px;width:80px;text-align:center;font-size:15px;color:#111;-webkit-text-stroke:0">人事部</div>
<div class="t" style="left:30px;top:541px;width:71px;text-align:center;font-size:15px;color:#111;-webkit-text-stroke:0">戴安娜</div>
<div class="t" style="left:102px;top:541px;width:80px;text-align:center;font-size:15px;color:#111;-webkit-text-stroke:0">行政部</div>
<div class="t" style="left:30px;top:569px;width:71px;text-align:center;font-size:15px;color:#111;-webkit-text-stroke:0">李丽琪</div>
<div class="t" style="left:102px;top:569px;width:80px;text-align:center;font-size:15px;color:#111;-webkit-text-stroke:0">行政部</div>
<div class="t" style="left:30px;top:597px;width:71px;text-align:center;font-size:15px;color:#111;-webkit-text-stroke:0">李佳琪</div>
<div class="t" style="left:102px;top:597px;width:80px;text-align:center;font-size:15px;color:#111;-webkit-text-stroke:0">经理室</div>
<div class="t" style="left:30px;top:625px;width:71px;text-align:center;font-size:15px;color:#111;-webkit-text-stroke:0">王萌萌</div>
<div class="t" style="left:102px;top:625px;width:80px;text-align:center;font-size:15px;color:#111;-webkit-text-stroke:0">人事部</div>
<div class="t" style="left:30px;top:653px;width:71px;text-align:center;font-size:15px;color:#111;-webkit-text-stroke:0">张胜利</div>
<div class="t" style="left:102px;top:653px;width:80px;text-align:center;font-size:15px;color:#111;-webkit-text-stroke:0">销售部</div>
<div class="t" style="left:30px;top:681px;width:71px;text-align:center;font-size:15px;color:#111;-webkit-text-stroke:0">胡明安</div>
<div class="t" style="left:102px;top:681px;width:80px;text-align:center;font-size:15px;color:#111;-webkit-text-stroke:0">行政部</div>
<div class="t" style="left:30px;top:709px;width:71px;text-align:center;font-size:15px;color:#111;-webkit-text-stroke:0">王丽莎</div>
<div class="t" style="left:102px;top:709px;width:80px;text-align:center;font-size:15px;color:#111;-webkit-text-stroke:0">财务部</div>
<div style="position:absolute;left:784px;top:309px;width:40px;height:31px;border:2px solid #1e6b3d;border-right:none"></div>
<div style="position:absolute;left:822px;top:226px;width:1px;height:492px;background:#9b9b9b"></div>
<div style="position:absolute;left:823px;top:207px;width:21px;height:511px;background:#e6e6e6"></div>
<div style="position:absolute;left:826px;top:210px;width:15px;height:15px;background:#fff;border:1px solid #c6c6c6"></div>
<svg style="position:absolute;left:829px;top:215px;" width="9" height="5" viewBox="0 0 9 5"><path d="M0 5l4.5-5L9 5z" fill="#777"/></svg>
<div style="position:absolute;left:825px;top:226px;width:17px;height:477px;background:#d9d9d9"></div>
<div style="position:absolute;left:826px;top:226px;width:15px;height:163px;background:#fff;border:1px solid #c6c6c6"></div>
<div style="position:absolute;left:826px;top:703px;width:15px;height:15px;background:#fff;border:1px solid #c6c6c6"></div>
<svg style="position:absolute;left:829px;top:710px;" width="9" height="5" viewBox="0 0 9 5"><path d="M0 0h9l-4.5 5z" fill="#777"/></svg>
<div style="position:absolute;left:1px;top:717px;width:822px;height:1px;background:#9b9b9b"></div>
<div style="position:absolute;left:1px;top:718px;width:843px;height:27px;background:#e6e6e6"></div>
<svg style="position:absolute;left:28px;top:727px;" width="5" height="8" viewBox="0 0 5 8"><path d="M5 0v8L0 4z" fill="#c0c0c0"/></svg>
<svg style="position:absolute;left:56px;top:727px;" width="5" height="8" viewBox="0 0 5 8"><path d="M0 0v8l5-4z" fill="#217346"/></svg>
<div style="position:absolute;left:101px;top:721px;width:1px;height:19px;background:#aaa"></div>
<div class="t" style="left:114px;top:723.5px;font-size:13.5px;color:#444;">Sheet1</div>
<div style="position:absolute;left:170px;top:721px;width:1px;height:19px;background:#aaa"></div>
<div class="t" style="left:183px;top:723.5px;font-size:13.5px;color:#444;">Sheet2</div>
<div style="position:absolute;left:400px;top:724px;width:383px;height:15px;background:#fff;border:1px solid #c6c6c6"></div>
<div style="position:absolute;left:783px;top:724px;width:25px;height:15px;background:#d9d9d9"></div>
<div style="position:absolute;left:808px;top:724px;width:15px;height:15px;background:#fff;border:1px solid #c6c6c6"></div>
<svg style="position:absolute;left:813px;top:727px;" width="5" height="9" viewBox="0 0 5 9"><path d="M0 0v9l5-4.5z" fill="#777"/></svg>
<div style="position:absolute;left:1px;top:745px;width:843px;height:1px;background:#c6c6c6"></div>
<div style="position:absolute;left:1px;top:746px;width:843px;height:21px;background:#f3f3f3"></div>
<div class="t" style="left:9px;top:751px;font-size:12px;color:#444;">就绪</div>
<div style="position:absolute;left:528px;top:746px;width:40px;height:21px;background:#d2d2d2"></div>
<svg style="position:absolute;left:541px;top:749px;" width="13" height="13" viewBox="0 0 13 13"><path d="M0.75 0.75h11.5v11.5H0.75zM4.5 0.5v12M8.5 0.5v12M0.5 4.5h12M0.5 8.5h12" fill="none" stroke="#707070" stroke-width="1.4"/></svg>
<svg style="position:absolute;left:581px;top:749px;" width="14" height="13" viewBox="0 0 14 13"><rect x="0.75" y="0.75" width="12.5" height="11.5" fill="none" stroke="#707070" stroke-width="1.5"/><rect x="3.5" y="3" width="7" height="7" fill="none" stroke="#707070"/><path d="M5 5h4M5 6.5h4M5 8h4" stroke="#707070"/></svg>
<svg style="position:absolute;left:618px;top:746px;" width="20" height="20" viewBox="618 746 20 20"><path d="M621.75 749.75h12.5v11.5h-12.5z" fill="none" stroke="#707070" stroke-width="1.5"/><path d="M622 756.2H630.2V749.5M626 749.5V756" fill="none" stroke="#707070" stroke-width="1.3"/></svg>
<div style="position:absolute;left:653px;top:755px;width:9px;height:1.2px;background:#555"></div>
<div style="position:absolute;left:667px;top:756px;width:100px;height:1px;background:#999"></div>
<div style="position:absolute;left:715px;top:751px;width:5px;height:11px;background:#666"></div>
<svg style="position:absolute;left:772px;top:752px;" width="9" height="9" viewBox="0 0 9 9"><path d="M4.5 0v9M0 4.5h9" stroke="#555" stroke-width="1.2"/></svg>
<div class="t" style="left:794px;top:751px;font-size:12.5px;color:#444;">100%</div>
<div style="position:absolute;left:0px;top:0px;width:845px;height:1px;background:#7a7a7a"></div>
<div style="position:absolute;left:0px;top:767px;width:845px;height:1px;background:#7a7a7a"></div>
<div style="position:absolute;left:0px;top:0px;width:1px;height:768px;background:#7a7a7a"></div>
<div style="position:absolute;left:844px;top:0px;width:1px;height:768px;background:#7a7a7a"></div>
<div style="position:absolute;left:203px;top:164px;width:419px;height:583px;box-shadow:0 0 20px 2px rgba(0,0,0,0.28)"></div>
<div style="position:absolute;left:203px;top:164px;width:419px;height:583px;background:#f0f0f0;border:1px solid #6b6b6b"></div>
<div style="position:absolute;left:204px;top:165px;width:417px;height:30px;background:#fff"></div>
<div class="t" style="left:212px;top:174px;font-size:12px;color:#000;">页面设置</div>
<div class="t" style="left:549.5px;top:171.5px;font-size:14px;color:#000;transform:scaleX(0.8);transform-origin:0 0;-webkit-text-stroke:0.1px">?</div>
<svg style="position:absolute;left:593px;top:174px;" width="11" height="11" viewBox="0 0 11 11"><path d="M0.5 0.5l10 10M10.5 0.5l-10 10" stroke="#111" stroke-width="1.1"/></svg>
<div style="position:absolute;left:210px;top:231px;width:403px;height:464px;background:#fff;border:1px solid #d9d9d9"></div>
<div style="position:absolute;left:212px;top:206px;width:51px;height:26px;background:#f0f0f0;border-top:1px solid #d9d9d9;border-right:1px solid #d9d9d9;border-left:none"></div>
<div class="t" style="left:226px;top:213px;font-size:12px;color:#000;">页面</div>
<div style="position:absolute;left:320px;top:206px;width:69px;height:26px;background:#f0f0f0;border-top:1px solid #d9d9d9;border-right:1px solid #d9d9d9;border-left:1px solid #d9d9d9"></div>
<div class="t" style="left:327px;top:213px;font-size:12px;color:#000;">页眉/页脚</div>
<div style="position:absolute;left:389px;top:206px;width:52px;height:26px;background:#f0f0f0;border-top:1px solid #d9d9d9;border-right:1px solid #d9d9d9;border-left:1px solid #d9d9d9"></div>
<div class="t" style="left:397px;top:213px;font-size:12px;color:#000;">工作表</div>
<div style="position:absolute;left:262px;top:204px;width:58px;height:28px;background:#fff;border:1px solid #d9d9d9;border-bottom:none"></div>
<div class="t" style="left:273px;top:213px;font-size:12px;color:#000;">页边距</div>
<div style="position:absolute;left:267px;top:208px;width:47px;height:22px;border:1px dotted #000"></div>
<div style="position:absolute;left:263px;top:231px;width:56px;height:1px;background:#fff"></div>
<div class="t" style="left:386px;top:247px;font-size:12px;color:#000">上(<u>T</u>):</div>
<div style="position:absolute;left:386px;top:265px;width:53px;height:26px;background:#fff;border:1px solid #adadad"></div>
<div class="t" style="left:391px;top:271px;font-size:12.5px;color:#000;">2.5</div>
<div style="position:absolute;left:422px;top:267px;width:15px;height:11px;background:#e5e5e5;border:1px solid #c3c3c3"></div>
<div style="position:absolute;left:422px;top:278px;width:15px;height:11px;background:#e5e5e5;border:1px solid #c3c3c3"></div>
<svg style="position:absolute;left:426px;top:271px;" width="7" height="4" viewBox="0 0 7 4"><path d="M0.5 3.5l3-3 3 3z" fill="#000"/></svg>
<svg style="position:absolute;left:426px;top:282px;" width="7" height="4" viewBox="0 0 7 4"><path d="M0.5 0.5h6l-3 3z" fill="#000"/></svg>
<div class="t" style="left:489px;top:247px;font-size:12px;color:#000">页眉(<u>A</u>):</div>
<div style="position:absolute;left:489px;top:265px;width:53px;height:26px;background:#fff;border:1px solid #adadad"></div>
<div class="t" style="left:494px;top:271px;font-size:12.5px;color:#000;">1.3</div>
<div style="position:absolute;left:525px;top:267px;width:15px;height:11px;background:#e5e5e5;border:1px solid #c3c3c3"></div>
<div style="position:absolute;left:525px;top:278px;width:15px;height:11px;background:#e5e5e5;border:1px solid #c3c3c3"></div>
<svg style="position:absolute;left:529px;top:271px;" width="7" height="4" viewBox="0 0 7 4"><path d="M0.5 3.5l3-3 3 3z" fill="#000"/></svg>
<svg style="position:absolute;left:529px;top:282px;" width="7" height="4" viewBox="0 0 7 4"><path d="M0.5 0.5h6l-3 3z" fill="#000"/></svg>
<div class="t" style="left:283px;top:372px;font-size:12px;color:#000">左(<u>L</u>):</div>
<div style="position:absolute;left:283px;top:390px;width:53px;height:26px;background:#fff;border:1px solid #adadad"></div>
<div class="t" style="left:288px;top:396px;font-size:12.5px;color:#000;">1.9</div>
<div style="position:absolute;left:319px;top:392px;width:15px;height:11px;background:#e5e5e5;border:1px solid #c3c3c3"></div>
<div style="position:absolute;left:319px;top:403px;width:15px;height:11px;background:#e5e5e5;border:1px solid #c3c3c3"></div>
<svg style="position:absolute;left:323px;top:396px;" width="7" height="4" viewBox="0 0 7 4"><path d="M0.5 3.5l3-3 3 3z" fill="#000"/></svg>
<svg style="position:absolute;left:323px;top:407px;" width="7" height="4" viewBox="0 0 7 4"><path d="M0.5 0.5h6l-3 3z" fill="#000"/></svg>
<div class="t" style="left:489px;top:372px;font-size:12px;color:#000">右(<u>R</u>):</div>
<div style="position:absolute;left:489px;top:390px;width:53px;height:26px;background:#fff;border:1px solid #adadad"></div>
<div class="t" style="left:494px;top:396px;font-size:12.5px;color:#000;">1.9</div>
<div style="position:absolute;left:525px;top:392px;width:15px;height:11px;background:#e5e5e5;border:1px solid #c3c3c3"></div>
<div style="position:absolute;left:525px;top:403px;width:15px;height:11px;background:#e5e5e5;border:1px solid #c3c3c3"></div>
<svg style="position:absolute;left:529px;top:396px;" width="7" height="4" viewBox="0 0 7 4"><path d="M0.5 3.5l3-3 3 3z" fill="#000"/></svg>
<svg style="position:absolute;left:529px;top:407px;" width="7" height="4" viewBox="0 0 7 4"><path d="M0.5 0.5h6l-3 3z" fill="#000"/></svg>
<div class="t" style="left:386px;top:498px;font-size:12px;color:#000">下(<u>B</u>):</div>
<div style="position:absolute;left:386px;top:516px;width:53px;height:26px;background:#fff;border:1px solid #adadad"></div>
<div class="t" style="left:391px;top:522px;font-size:12.5px;color:#000;">2.5</div>
<div style="position:absolute;left:422px;top:518px;width:15px;height:11px;background:#e5e5e5;border:1px solid #c3c3c3"></div>
<div style="position:absolute;left:422px;top:529px;width:15px;height:11px;background:#e5e5e5;border:1px solid #c3c3c3"></div>
<svg style="position:absolute;left:426px;top:522px;" width="7" height="4" viewBox="0 0 7 4"><path d="M0.5 3.5l3-3 3 3z" fill="#000"/></svg>
<svg style="position:absolute;left:426px;top:533px;" width="7" height="4" viewBox="0 0 7 4"><path d="M0.5 0.5h6l-3 3z" fill="#000"/></svg>
<div class="t" style="left:489px;top:498px;font-size:12px;color:#000">页脚(<u>F</u>):</div>
<div style="position:absolute;left:489px;top:516px;width:53px;height:26px;background:#fff;border:1px solid #adadad"></div>
<div class="t" style="left:494px;top:522px;font-size:12.5px;color:#000;">1.3</div>
<div style="position:absolute;left:525px;top:518px;width:15px;height:11px;background:#e5e5e5;border:1px solid #c3c3c3"></div>
<div style="position:absolute;left:525px;top:529px;width:15px;height:11px;background:#e5e5e5;border:1px solid #c3c3c3"></div>
<svg style="position:absolute;left:529px;top:522px;" width="7" height="4" viewBox="0 0 7 4"><path d="M0.5 3.5l3-3 3 3z" fill="#000"/></svg>
<svg style="position:absolute;left:529px;top:533px;" width="7" height="4" viewBox="0 0 7 4"><path d="M0.5 0.5h6l-3 3z" fill="#000"/></svg>
<svg style="position:absolute;left:367px;top:330px;" width="93" height="128" viewBox="0 0 93 128"><rect x="1.5" y="1.5" width="90.5" height="124.5" fill="#000"/><rect x="0.5" y="0.5" width="90" height="124" fill="#fff" stroke="#000"/><path d="M11.5 1v123M80.5 1v123M1 6.5h89M1 15.5h89M1 110.5h89M1 120.5h89" stroke="#bdbdbd" stroke-width="1"/><path d="M11.5 15.5h63" stroke="#c0c0c0" stroke-width="1"/><path d="M11.5 19.5h63" stroke="#c0c0c0" stroke-width="1"/><path d="M11.5 23.5h63" stroke="#c0c0c0" stroke-width="1"/><path d="M11.5 27.5h63" stroke="#c0c0c0" stroke-width="1"/><path d="M11.5 31.5h63" stroke="#c0c0c0" stroke-width="1"/><path d="M11.5 35.5h63" stroke="#c0c0c0" stroke-width="1"/><path d="M11.5 39.5h63" stroke="#c0c0c0" stroke-width="1"/><path d="M11.5 43.5h63" stroke="#c0c0c0" stroke-width="1"/><path d="M11.5 47.5h63" stroke="#c0c0c0" stroke-width="1"/><path d="M11.5 51.5h63" stroke="#c0c0c0" stroke-width="1"/><path d="M11.5 55.5h63" stroke="#c0c0c0" stroke-width="1"/><path d="M11.5 59.5h63" stroke="#c0c0c0" stroke-width="1"/><path d="M11.5 63.5h63" stroke="#c0c0c0" stroke-width="1"/><path d="M11.5 67.5h63" stroke="#c0c0c0" stroke-width="1"/><path d="M11.5 71.5h63" stroke="#c0c0c0" stroke-width="1"/><path d="M11.5 75.5h63" stroke="#c0c0c0" stroke-width="1"/><path d="M11.5 15.5v60" stroke="#c0c0c0" stroke-width="1"/><path d="M27.5 15.5v60" stroke="#c0c0c0" stroke-width="1"/><path d="M43.5 15.5v60" stroke="#c0c0c0" stroke-width="1"/><path d="M59.5 15.5v60" stroke="#c0c0c0" stroke-width="1"/><path d="M74.5 15.5v60" stroke="#c0c0c0" stroke-width="1"/></svg>
<div class="t" style="left:219px;top:549px;font-size:12px;color:#000;">居中方式</div>
<div style="position:absolute;left:276px;top:554px;width:331px;height:1px;background:#dcdcdc"></div>
<svg style="position:absolute;left:228px;top:576px;" width="13" height="13" viewBox="0 0 13 13"><rect x="0.5" y="0.5" width="12" height="12" fill="#fff" stroke="#333"/></svg>
<div class="t" style="left:245px;top:577px;font-size:12px;color:#000;">水平(<u>Z</u>)</div>
<svg style="position:absolute;left:228px;top:601px;" width="13" height="13" viewBox="0 0 13 13"><rect x="0.5" y="0.5" width="12" height="12" fill="#fff" stroke="#333"/></svg>
<div class="t" style="left:245px;top:602px;font-size:12px;color:#000;">垂直(<u>V</u>)</div>
<div style="position:absolute;left:352px;top:653px;width:74px;height:29px;background:#e1e1e1;border:1px solid #adadad"></div>
<div class="t" style="left:352px;top:662px;width:74px;text-align:center;font-size:12px;color:#000">打印(<u>P</u>)...</div>
<div style="position:absolute;left:436px;top:653px;width:85px;height:29px;background:#e1e1e1;border:1px solid #adadad"></div>
<div class="t" style="left:436px;top:662px;width:85px;text-align:center;font-size:12px;color:#000">打印预览(<u>W</u>)</div>
<div style="position:absolute;left:531px;top:653px;width:74px;height:29px;background:#e1e1e1;border:1px solid #adadad"></div>
<div class="t" style="left:531px;top:662px;width:74px;text-align:center;font-size:12px;color:#000">选项(<u>O</u>)...</div>
<div style="position:absolute;left:456px;top:707px;width:74px;height:29px;background:#e1e1e1;border:2px solid #0078d7"></div>
<div class="t" style="left:456px;top:716px;width:74px;text-align:center;font-size:12px;color:#000">确定</div>
<div style="position:absolute;left:540px;top:707px;width:74px;height:29px;background:#e1e1e1;border:1px solid #adadad"></div>
<div class="t" style="left:540px;top:716px;width:74px;text-align:center;font-size:12px;color:#000">取消</div>
<svg style="position:absolute;left:0px;top:0px;" width="845" height="768" viewBox="0 0 845 768"><ellipse cx="199.8" cy="46.8" rx="28.5" ry="15" fill="none" stroke="#e8141e" stroke-width="2.3"/><ellipse cx="441" cy="152.5" rx="18" ry="13.3" fill="none" stroke="#e8141e" stroke-width="2"/><ellipse cx="264" cy="585" rx="51" ry="19" fill="none" stroke="#e8141e" stroke-width="2"/><path d="M228.4 95.3L376.0 152.1" stroke="#e8141e" stroke-width="3.5" stroke-linecap="round"/><path d="M390.3 157.6L371.0 159.6L377.3 143.2z" fill="#e8141e"/><path d="M338.6 485.3L269.2 561.0" stroke="#e8141e" stroke-width="3.2" stroke-linecap="round"/><path d="M258.7 572.4L264.1 553.6L277.0 565.4z" fill="#e8141e"/><path d="M346.5 738L449.0 730.9" stroke="#e8141e" stroke-width="3.2" stroke-linecap="round"/><path d="M465.5 729.8L447.7 740.1L446.4 722.1z" fill="#e8141e"/></svg>
</body></html>
